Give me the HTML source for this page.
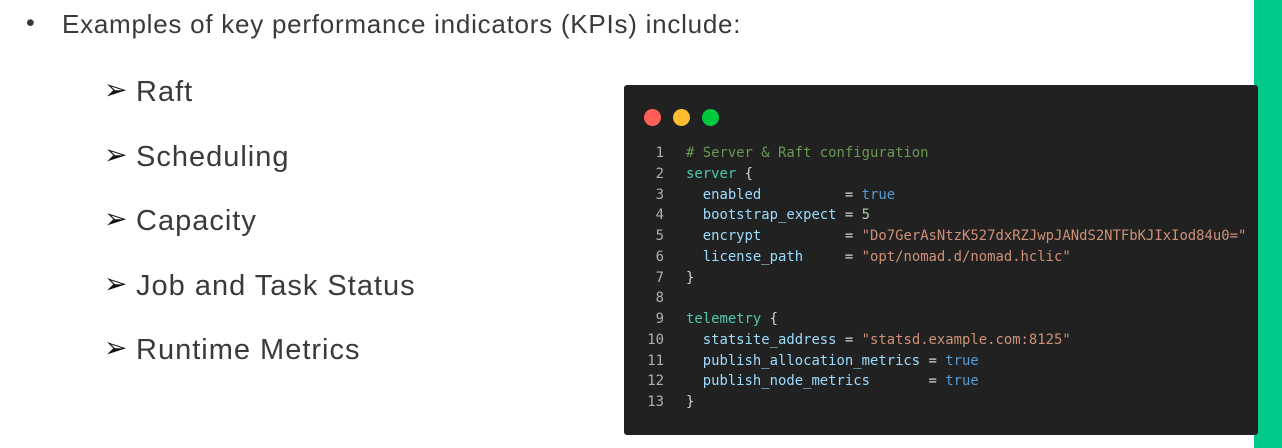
<!DOCTYPE html>
<html><head><style>
html,body{margin:0;padding:0;width:1282px;height:448px;background:#fff;overflow:hidden;position:relative;font-family:"Liberation Sans",sans-serif;color:#3a3a3a}
.g{position:absolute;left:1254px;top:0;width:28px;height:448px;background:#00c98a}
.h{position:absolute;left:62px;top:9px;font-size:26px;letter-spacing:0.75px;white-space:nowrap}
.b{position:absolute;left:26px;top:9px;font-size:25px}
.s{position:absolute;left:104px;font-size:29px;letter-spacing:1px;white-space:nowrap}
.s span{display:inline-block;width:32px;font-size:28px;position:relative;top:-2px;color:#111;letter-spacing:0;font-family:"DejaVu Sans",sans-serif}
.c{position:absolute;left:624px;top:85px;width:634px;height:350px;background:#212121;border-radius:3px}
.d{position:absolute;top:24px;width:17px;height:17px;border-radius:50%}
pre{position:absolute;left:0;top:58px;margin:0;font-family:"DejaVu Sans Mono",monospace;font-size:13.9px;line-height:20.75px;color:#9cdcfe}
.n{color:#b0b0b0;display:inline-block;width:40px;text-align:right;margin-right:22px}
.cm{color:#6a9955}.k{color:#4ec9b0}.t{color:#569cd6}.st{color:#ce9178}.w{color:#d4d4d4}.num{color:#b5cea8}
</style></head><body>
<div class="g"></div>
<div class="b">•</div>
<div class="h">Examples of key performance indicators (KPIs) include:</div>
<div class="s" style="top:75px"><span>➢</span>Raft</div>
<div class="s" style="top:140px"><span>➢</span>Scheduling</div>
<div class="s" style="top:204px"><span>➢</span>Capacity</div>
<div class="s" style="top:269px"><span>➢</span>Job and Task Status</div>
<div class="s" style="top:333px"><span>➢</span>Runtime Metrics</div>
<div class="c">
<div class="d" style="left:20px;background:#ff5f57"></div>
<div class="d" style="left:49px;background:#febc2e"></div>
<div class="d" style="left:78px;background:#00c940"></div>
<pre><span class="n">1</span><span class="cm"># Server &amp; Raft configuration</span>
<span class="n">2</span><span class="k">server</span> <span class="w">{</span>
<span class="n">3</span>  enabled          <span class="w">=</span> <span class="t">true</span>
<span class="n">4</span>  bootstrap_expect <span class="w">=</span> <span class="num">5</span>
<span class="n">5</span>  encrypt          <span class="w">=</span> <span class="st">"Do7GerAsNtzK527dxRZJwpJANdS2NTFbKJIxIod84u0="</span>
<span class="n">6</span>  license_path     <span class="w">=</span> <span class="st">"opt/nomad.d/nomad.hclic"</span>
<span class="n">7</span><span class="w">}</span>
<span class="n">8</span>
<span class="n">9</span><span class="k">telemetry</span> <span class="w">{</span>
<span class="n">10</span>  statsite_address <span class="w">=</span> <span class="st">"statsd.example.com:8125"</span>
<span class="n">11</span>  publish_allocation_metrics <span class="w">=</span> <span class="t">true</span>
<span class="n">12</span>  publish_node_metrics       <span class="w">=</span> <span class="t">true</span>
<span class="n">13</span><span class="w">}</span></pre>
</div>
</body></html>
